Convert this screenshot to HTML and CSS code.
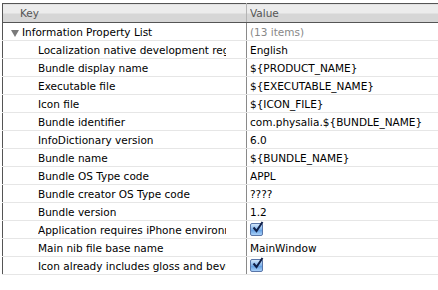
FILE: index.html
```html
<!doctype html>
<html>
  <head>
    <meta charset="utf-8">
    <link rel="stylesheet" href="styles.css">
  </head>
  <body>
    <table class="plist">
      <colgroup><col class="kcol"><col></colgroup>
      <tr class="head">
        <th class="key"><div class="vt">Key</div></th>
        <th class="val"><div class="vt">Value</div></th>
      </tr>
      <tr class="root">
        <td class="key"><div class="kt"><span class="tri"></span>Information Property List</div></td>
        <td class="val dim"><div class="vt">(13 items)</div></td>
      </tr>
      <tr><td class="key child"><div class="kt">Localization native development region</div></td><td class="val"><div class="vt">English</div></td></tr>
      <tr><td class="key child"><div class="kt">Bundle display name</div></td><td class="val"><div class="vt">${PRODUCT_NAME}</div></td></tr>
      <tr><td class="key child"><div class="kt">Executable file</div></td><td class="val"><div class="vt">${EXECUTABLE_NAME}</div></td></tr>
      <tr><td class="key child"><div class="kt">Icon file</div></td><td class="val"><div class="vt">${ICON_FILE}</div></td></tr>
      <tr><td class="key child"><div class="kt">Bundle identifier</div></td><td class="val"><div class="vt">com.physalia.${BUNDLE_NAME}</div></td></tr>
      <tr><td class="key child"><div class="kt">InfoDictionary version</div></td><td class="val"><div class="vt">6.0</div></td></tr>
      <tr><td class="key child"><div class="kt">Bundle name</div></td><td class="val"><div class="vt">${BUNDLE_NAME}</div></td></tr>
      <tr><td class="key child"><div class="kt">Bundle OS Type code</div></td><td class="val"><div class="vt">APPL</div></td></tr>
      <tr><td class="key child"><div class="kt">Bundle creator OS Type code</div></td><td class="val"><div class="vt">????</div></td></tr>
      <tr><td class="key child"><div class="kt">Bundle version</div></td><td class="val"><div class="vt">1.2</div></td></tr>
      <tr><td class="key child"><div class="kt">Application requires iPhone environment</div></td><td class="val"><div class="vt"><span class="check"><svg width="13" height="13" viewBox="0 0 13 13"><path d="M2.5 6.5 L5.5 10 L11.5 1" fill="none" stroke="#10204a" stroke-width="2"/></svg></span></div></td></tr>
      <tr><td class="key child"><div class="kt">Main nib file base name</div></td><td class="val"><div class="vt">MainWindow</div></td></tr>
      <tr><td class="key child"><div class="kt">Icon already includes gloss and bevel effects</div></td><td class="val"><div class="vt"><span class="check"><svg width="13" height="13" viewBox="0 0 13 13"><path d="M2.5 6.5 L5.5 10 L11.5 1" fill="none" stroke="#10204a" stroke-width="2"/></svg></span></div></td></tr>
    </table>
  </body>
</html>
```

FILE: styles.css
```css
body {
  margin: 0;
  padding: 3px 0 0 2px;
  background: #fff;
  font-family: "DejaVu Sans", sans-serif;
  font-size: 10.5px;
  color: #000;
}
.plist {
  width: 436px;
  border-collapse: collapse;
  table-layout: fixed;
  border-left: 1px solid #555;
  border-bottom: 1px solid #555;
}
.kcol {
  width: 244px;
}
.plist td, .plist th {
  padding: 0;
  height: 17px;
  white-space: nowrap;
  overflow: hidden;
  text-align: left;
  border-bottom: 1px solid #e6e6e6;
}
.plist td.key, .plist th.key {
  border-right: 1px solid #8a8a8a;
}
.kt, .vt {
  height: 17px;
  line-height: 19px;
  overflow: hidden;
}
.kt {
  margin-right: 20px;
}
.head th {
  height: 18px;
  font-weight: normal;
  color: #555;
  border-top: 1px solid #555;
  border-bottom: 1px solid #555;
  background: linear-gradient(#ececec 0, #ececec 50%, #d6d6d6 50%, #d6d6d6 100%);
}
.head .vt {
  height: 18px;
}
.head th.key {
  padding-left: 17px;
  border-right: 1px solid #b4b4b4;
}
.head th.val {
  padding-left: 3px;
}
.root td.key {
  padding-left: 8px;
}
.tri {
  display: inline-block;
  width: 0;
  height: 0;
  margin-right: 3px;
  border-left: 4px solid transparent;
  border-right: 4px solid transparent;
  border-top: 7px solid #7a7a7a;
  vertical-align: middle;
}
.key.child {
  padding-left: 35px;
}
.val {
  padding-left: 3px !important;
}
.dim {
  color: #888;
}
.check {
  display: inline-block;
  width: 11px;
  height: 11px;
  margin-top: 2px;
  border: 1px solid #5a76a8;
  border-radius: 2px;
  background: linear-gradient(#d2e6fb, #7fb2ea 50%, #5b99df 51%, #a9d1fa);
  vertical-align: top;
  position: relative;
}
.check svg {
  position: absolute;
  left: 0;
  top: -3px;
}
```
